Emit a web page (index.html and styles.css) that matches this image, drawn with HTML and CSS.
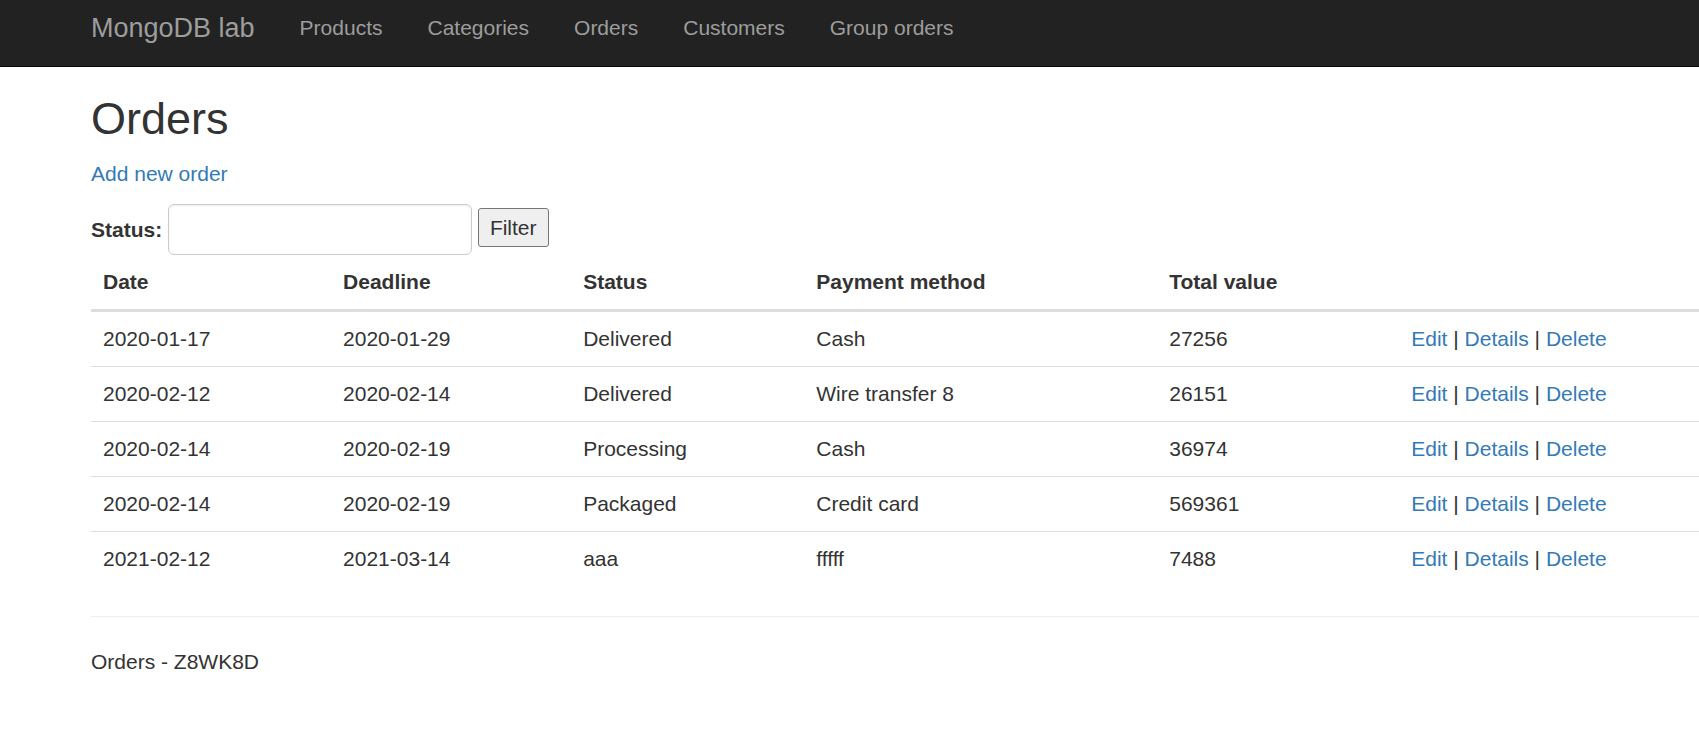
FILE: index.html
```html
<!DOCTYPE html>
<html lang="en">
<head>
<meta charset="utf-8">
<meta name="viewport" content="width=device-width, initial-scale=1">
<title>Orders - MongoDB lab</title>
<link rel="stylesheet" href="styles.css">
</head>
<body>
<nav class="navbar">
  <a class="brand" href="#">MongoDB lab</a>
  <a class="nav-link" href="#">Products</a>
  <a class="nav-link" href="#">Categories</a>
  <a class="nav-link" href="#">Orders</a>
  <a class="nav-link" href="#">Customers</a>
  <a class="nav-link" href="#">Group orders</a>
</nav>
<main class="content">
  <h2 class="title">Orders</h2>
  <p class="create"><a href="#">Add new order</a></p>
  <form class="filter">
    <label class="filter-label" for="status">Status:</label>
    <input class="filter-input" id="status" name="status" type="text">
    <button class="filter-button" type="button">Filter</button>
  </form>
  <table class="orders">
    <colgroup>
      <col class="col-date">
      <col class="col-date">
      <col class="col-status">
      <col class="col-payment">
      <col class="col-total">
      <col>
    </colgroup>
    <thead>
      <tr><th>Date</th><th>Deadline</th><th>Status</th><th>Payment method</th><th>Total value</th><th></th></tr>
    </thead>
    <tbody>
      <tr><td>2020-01-17</td><td>2020-01-29</td><td>Delivered</td><td>Cash</td><td>27256</td><td><a href="#">Edit</a> | <a href="#">Details</a> | <a href="#">Delete</a></td></tr>
      <tr><td>2020-02-12</td><td>2020-02-14</td><td>Delivered</td><td>Wire transfer 8</td><td>26151</td><td><a href="#">Edit</a> | <a href="#">Details</a> | <a href="#">Delete</a></td></tr>
      <tr><td>2020-02-14</td><td>2020-02-19</td><td>Processing</td><td>Cash</td><td>36974</td><td><a href="#">Edit</a> | <a href="#">Details</a> | <a href="#">Delete</a></td></tr>
      <tr><td>2020-02-14</td><td>2020-02-19</td><td>Packaged</td><td>Credit card</td><td>569361</td><td><a href="#">Edit</a> | <a href="#">Details</a> | <a href="#">Delete</a></td></tr>
      <tr><td>2021-02-12</td><td>2021-03-14</td><td>aaa</td><td>fffff</td><td>7488</td><td><a href="#">Edit</a> | <a href="#">Details</a> | <a href="#">Delete</a></td></tr>
    </tbody>
  </table>
  <hr class="rule">
  <footer class="footer">Orders - Z8WK8D</footer>
</main>
</body>
</html>
```

FILE: styles.css
```css
* {
  box-sizing: border-box;
}

body {
  margin: 0;
  background: #fff;
  color: #333;
  font-family: "Liberation Sans", Arial, sans-serif;
  font-size: 21px;
  line-height: 30px;
}

a {
  color: #337ab7;
  text-decoration: none;
}

.navbar {
  display: flex;
  align-items: center;
  gap: 45px;
  padding: 13px 0 23px 91px;
  border-bottom: 1px solid #080808;
  background: #222;
}

.navbar a {
  color: #9d9d9d;
}

.brand {
  font-size: 27px;
}

.content {
  padding: 27px 0 30px 91px;
}

.title {
  margin: 0 0 15px;
  font-size: 45px;
  font-weight: 400;
  line-height: 50px;
}

.create {
  margin: 0 0 15px;
}

.filter-label {
  display: inline-block;
  font-weight: 700;
  vertical-align: middle;
}

.filter-input {
  width: 304px;
  height: 51px;
  padding: 9px 18px;
  border: 1px solid #ccc;
  border-radius: 6px;
  box-shadow: inset 0 1px 2px rgba(0, 0, 0, 0.08);
  color: #555;
  font: inherit;
  vertical-align: middle;
}

.filter-button {
  padding: 4px 11px 3px;
  border: 1px solid #767676;
  border-radius: 3px;
  background: #efefef;
  color: inherit;
  font: inherit;
}

.orders {
  width: 100%;
  border-collapse: collapse;
  table-layout: fixed;
}

.col-date {
  width: 14.93%;
}

.col-status {
  width: 14.5%;
}

.col-payment {
  width: 21.95%;
}

.col-total {
  width: 15.05%;
}

.orders th,
.orders td {
  padding: 12px;
  text-align: left;
}

.orders thead {
  border-bottom: 3px solid #ddd;
}

.orders tr + tr {
  border-top: 1px solid #ddd;
}

.rule {
  margin: 30px 0;
  border: 0;
  border-top: 1px solid #eee;
}
```
